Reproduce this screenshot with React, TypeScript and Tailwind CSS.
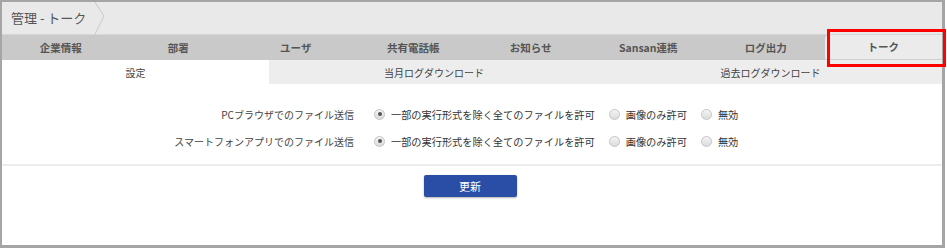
import React from "react";

const tabs = ["企業情報", "部署", "ユーザ", "共有電話帳", "お知らせ", "Sansan連携", "ログ出力", "トーク"];

function Radio({ checked }: { checked?: boolean }) {
  return (
    <span className="relative inline-block w-[11px] h-[11px] rounded-full border border-[#c4c4c4] bg-gradient-to-b from-[#f4f4f4] to-[#dcdcdc]">
      {checked && <span className="absolute left-[2.5px] top-[2.5px] w-[4px] h-[4px] rounded-full bg-[#555]" />}
    </span>
  );
}

function Row({ label }: { label: string }) {
  return (
    <div className="flex items-center h-[27px]">
      <div className="w-[352px] text-right text-[10px] text-[#444]">{label}</div>
      <div className="flex items-center ml-[20px] gap-[6px]">
        <Radio checked />
        <span className="text-[10.2px] text-[#333]">一部の実行形式を除く全てのファイルを許可</span>
      </div>
      <div className="flex items-center ml-[14px] gap-[6px]">
        <Radio />
        <span className="text-[10.2px] text-[#333]">画像のみ許可</span>
      </div>
      <div className="flex items-center ml-[14px] gap-[6px]">
        <Radio />
        <span className="text-[10.2px] text-[#333]">無効</span>
      </div>
    </div>
  );
}

export default function App() {
  return (
    <div
      className="w-[947px] h-[249px] bg-white relative"
      style={{ fontFamily: '"Noto Sans CJK JP", "Noto Sans", sans-serif' }}
    >
      <div className="w-[945px] h-[248px] border-t-2 border-l-2 border-r-[3px] border-b-[3px] border-[#a5a5a5] flex flex-col">
        {/* header */}
        <div className="h-[33px] bg-[#e9e9e9] flex items-center border-b border-[#d6d6d6]">
          <span className="ml-[9px] text-[13px] text-[#555]">管理 - トーク</span>
          <svg width="13" height="32" viewBox="0 0 13 32" className="ml-[8px] self-end">
            <polyline points="1,0 10,14 1,32" fill="none" stroke="#c8c8c8" strokeWidth="1" />
          </svg>
        </div>
        {/* tabs */}
        <div className="h-[25px] bg-[#c9c9c9] flex">
          {tabs.map((t, i) =>
            i === tabs.length - 1 ? (
              <div
                key={t}
                className="flex-1 flex items-center justify-center text-[10.5px] font-semibold text-[#555] bg-[#ebebeb] rounded-tl-[4px] border-b border-[#d0d0d0]"
              >
                {t}
              </div>
            ) : (
              <div key={t} className="flex-1 flex items-center justify-center text-[10.5px] font-semibold text-[#555]">
                {t}
              </div>
            )
          )}
        </div>
        {/* sub tabs */}
        <div className="h-[24px] flex bg-[#ededed]">
          <div className="w-[267px] bg-white flex items-center justify-center text-[10px] text-[#444]">設定</div>
          <div className="w-[330px] flex items-center justify-center text-[10px] text-[#444]">当月ログダウンロード</div>
          <div className="flex-1 flex items-center justify-center text-[10px] text-[#444]">過去ログダウンロード</div>
        </div>
        {/* form */}
        <div className="pt-[17px] pb-[9px] border-b-2 border-[#ededed]">
          <Row label="PCブラウザでのファイル送信" />
          <Row label="スマートフォンアプリでのファイル送信" />
        </div>
        <div className="flex justify-center pt-[9px]">
          <button className="ml-[-4px] w-[93px] h-[22px] bg-[#2a4ea6] text-white text-[11px] rounded-[2px] shadow-[0_1px_2px_rgba(0,0,0,0.3)]">
            更新
          </button>
        </div>
      </div>
      {/* red highlight */}
      <div className="absolute left-[827px] top-[29px] w-[119px] h-[38px] border-[3px] border-[#ff0000]" />
    </div>
  );
}
